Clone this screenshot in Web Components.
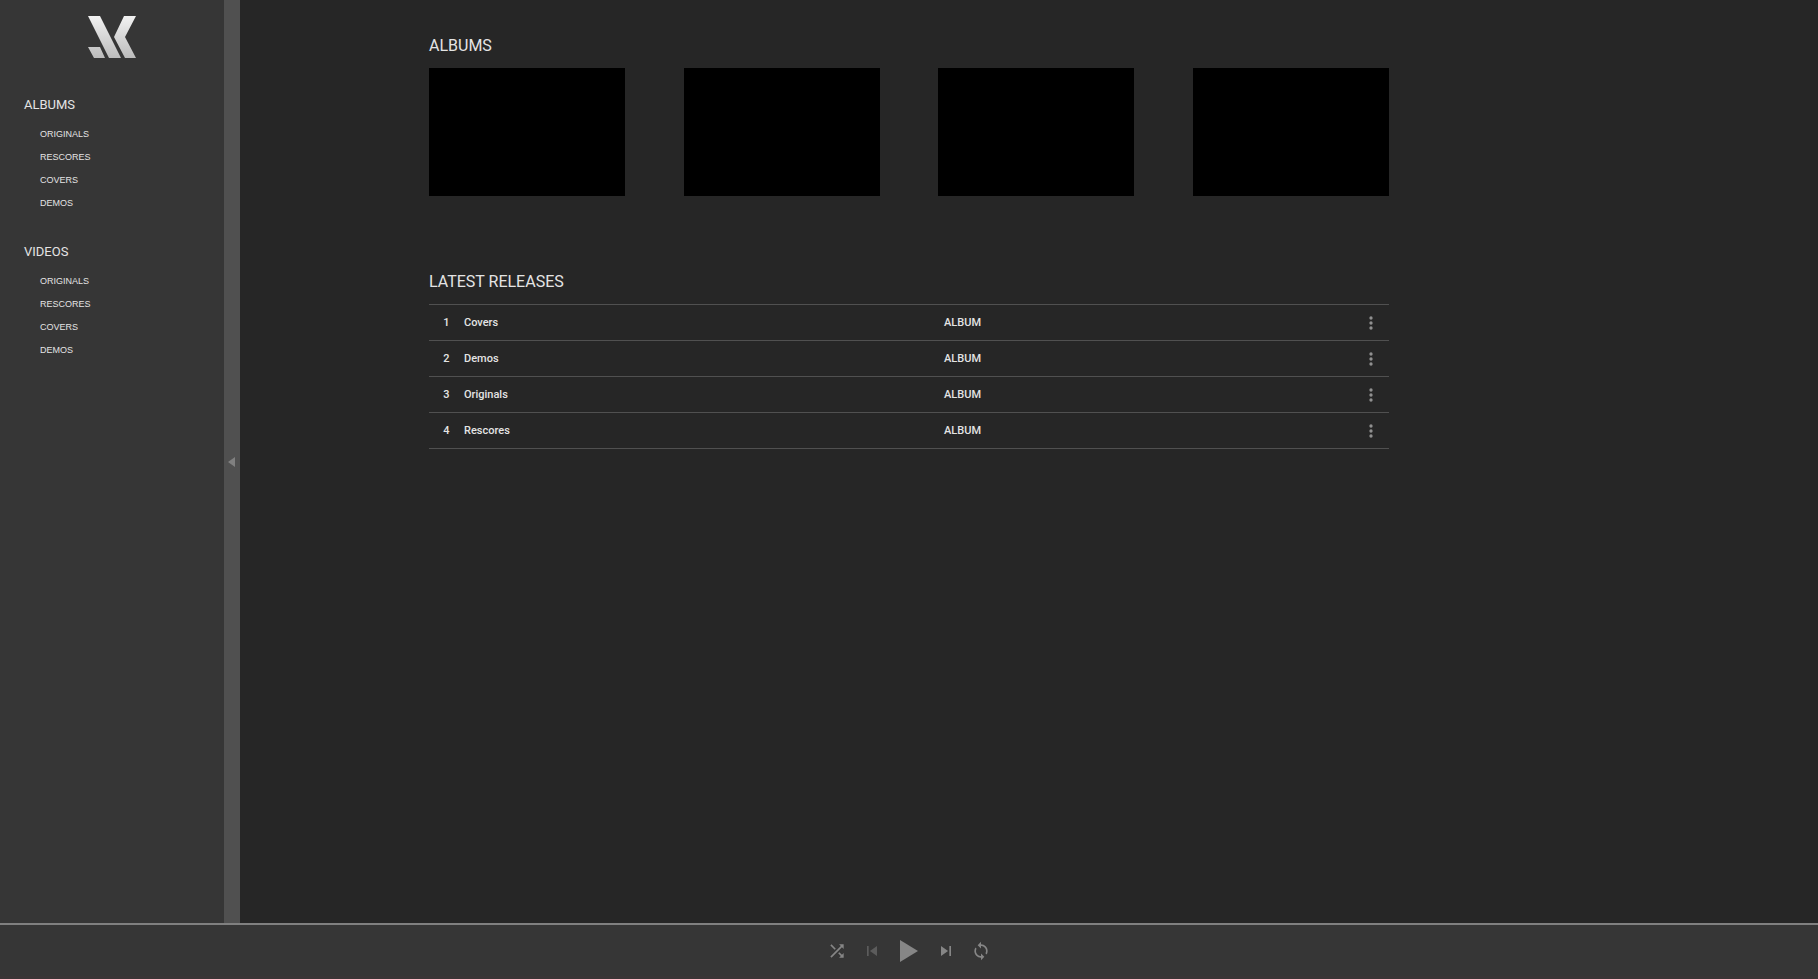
<!DOCTYPE html>
<html lang="en">
<head>
<meta charset="utf-8">
<title>JK Music</title>
<style>
  html, body { margin: 0; height: 100%; }
  body { background: #262626; color: #e4e4e4; font-family: Roboto, "Liberation Sans", sans-serif; }
</style>
</head>
<body>
<music-app></music-app>
<script>
const define = (name, html, setup) => {
  const template = document.createElement('template');
  template.innerHTML = html;
  customElements.define(name, class extends HTMLElement {
    constructor() {
      super();
      this.attachShadow({ mode: 'open' }).append(template.content.cloneNode(true));
    }
    connectedCallback() {
      if (setup) setup(this, this.shadowRoot);
    }
  });
};

define('jk-logo', `
  <style>
    :host { display: block; width: 48px; height: 42px; }
    svg { display: block; }
  </style>
  <svg width="48" height="42" viewBox="0 0 48 42" role="img" aria-label="JK">
    <defs><linearGradient id="g" x1="0" y1="0" x2="0" y2="42" gradientUnits="userSpaceOnUse">
      <stop offset="0" stop-color="#f2f2f2"/><stop offset="1" stop-color="#bcbcbc"/>
    </linearGradient></defs>
    <path fill="url(#g)" d="M0 0H12L33 42H21ZM36 0H48L37 21L48 42H37L26 21ZM0 31H12L17 42H6Z"/>
  </svg>`);

define('nav-item', `
  <style>
    :host { display: block; }
    a { display: block; font-size: 9px; line-height: 23px; color: inherit; text-decoration: none; }
  </style>
  <a href="#"><slot></slot></a>`);

define('nav-group', `
  <style>
    :host { display: block; }
    h2 { margin: 0 0 8px; font-size: 13px; line-height: 20px; font-weight: 400; }
    nav { padding-left: 16px; font-family: "Liberation Sans", sans-serif; }
  </style>
  <h2></h2><nav><slot></slot></nav>`,
  (el, root) => { root.querySelector('h2').textContent = el.getAttribute('heading'); });

define('side-bar', `
  <style>
    :host { display: flex; background: #363636; }
    .body { flex: 1; padding-top: 16px; }
    jk-logo { margin: 0 auto 37px; }
    .groups { display: grid; gap: 27px; padding-left: 24px; }
    button { width: 16px; padding: 0; border: 0; background: #505050; display: grid; place-items: center; }
  </style>
  <div class="body"><jk-logo></jk-logo><div class="groups"><slot></slot></div></div>
  <button aria-label="Collapse sidebar"><svg width="8" height="10" viewBox="0 0 8 10"><path fill="#808080" d="M7 0V10L0 5Z"/></svg></button>`);

define('page-section', `
  <style>
    :host { display: block; }
    h1 { margin: 0; font-size: 16px; line-height: 24px; font-weight: 400; }
    .body { margin-top: 10px; }
  </style>
  <h1></h1><div class="body"><slot></slot></div>`,
  (el, root) => { root.querySelector('h1').textContent = el.getAttribute('heading'); });

define('album-grid', `
  <style>
    :host { display: flex; justify-content: space-between; }
    a { display: block; width: 196px; height: 128px; background: #000; }
  </style>
  <a href="#" aria-label="Originals"></a><a href="#" aria-label="Rescores"></a>
  <a href="#" aria-label="Covers"></a><a href="#" aria-label="Demos"></a>`);

define('release-table', `
  <style>
    :host { display: block; }
    table { width: 100%; border-spacing: 0; border-top: 1px solid #505050; table-layout: fixed; font-size: 11px; font-weight: 500; }
    td { height: 35px; padding: 0; border-bottom: 1px solid #505050; }
    .num { width: 35px; text-align: center; }
    .kind { width: 409px; }
    .more { width: 36px; }
    button { display: grid; place-items: center; width: 36px; height: 35px; padding: 0; border: 0; background: none; }
    svg { display: block; }
  </style>
  <table><tbody></tbody></table>`,
  (el, root) => {
    root.querySelector('tbody').innerHTML = ['Covers', 'Demos', 'Originals', 'Rescores'].map((name, i) => `
      <tr><td class="num">${i + 1}</td><td>${name}</td><td class="kind">ALBUM</td>
      <td class="more"><button aria-label="More options for ${name}"><svg width="20" height="20" viewBox="0 0 24 24" fill="#909090"><circle cx="12" cy="6" r="2"/><circle cx="12" cy="12" r="2"/><circle cx="12" cy="18" r="2"/></svg></button></td></tr>`).join('');
  });

define('player-bar', `
  <style>
    :host { display: flex; align-items: center; justify-content: center; gap: 15px; height: 56px; box-sizing: border-box;
      border-top: 2px solid #808080; border-bottom: 3px solid #3a3536; background: #363636; }
    button { display: grid; place-items: center; padding: 0; border: 0; background: none; color: #868686; }
    button:disabled { color: #5c5c5c; }
    svg { display: block; fill: currentColor; }
  </style>
  <button aria-label="Shuffle"><svg width="20" height="20" viewBox="0 0 24 24"><path d="M10.59 9.17 5.41 4 4 5.41l5.17 5.17 1.42-1.41zM14.5 4l2.04 2.04L4 18.59 5.41 20 17.96 7.46 20 9.5V4h-5.5zm.33 9.41-1.41 1.41 3.13 3.13L14.5 20H20v-5.5l-2.04 2.04-3.13-3.13z"/></svg></button>
  <button aria-label="Previous" disabled><svg width="20" height="20" viewBox="0 0 24 24"><path d="M6 6h2v12H6zm3.5 6 8.5 6V6z"/></svg></button>
  <button aria-label="Play"><svg width="24" height="24" viewBox="0 0 24 24"><path d="M3 1V23L21 12Z"/></svg></button>
  <button aria-label="Next"><svg width="20" height="20" viewBox="0 0 24 24"><path d="M6 18l8.500-6L6 6v12zM16 6v12h2V6h-2z"/></svg></button>
  <button aria-label="Repeat"><svg width="20" height="20" viewBox="0 0 24 24"><path d="M12 4V1L8 5l4 4V6c3.310 0 6 2.690 6 6 0 1.010-.25 1.970-.7 2.800l1.460 1.460C19.540 15.030 20 13.570 20 12c0-4.420-3.580-8-8-8zm0 14c-3.310 0-6-2.690-6-6 0-1.010.25-1.970.7-2.800L5.240 7.740C4.460 8.970 4 10.430 4 12c0 4.420 3.580 8 8 8v3l4-4-4-4v3z"/></svg></button>`);

define('music-app', `
  <style>
    :host { display: grid; grid-template: "page" 1fr "player" auto / 1fr; min-height: 100vh; }
    side-bar { grid-area: page; justify-self: start; width: 240px; z-index: 1; }
    main { grid-area: page; justify-self: center; width: 960px; max-width: 100%; padding-top: 34px; display: grid; align-content: start; gap: 74px; }
    player-bar { grid-area: player; }
  </style>
  <side-bar>
    <nav-group heading="ALBUMS"><nav-item>ORIGINALS</nav-item><nav-item>RESCORES</nav-item><nav-item>COVERS</nav-item><nav-item>DEMOS</nav-item></nav-group>
    <nav-group heading="VIDEOS"><nav-item>ORIGINALS</nav-item><nav-item>RESCORES</nav-item><nav-item>COVERS</nav-item><nav-item>DEMOS</nav-item></nav-group>
  </side-bar>
  <main>
    <page-section heading="ALBUMS"><album-grid></album-grid></page-section>
    <page-section heading="LATEST RELEASES"><release-table></release-table></page-section>
  </main>
  <player-bar></player-bar>`);
</script>
</body>
</html>
